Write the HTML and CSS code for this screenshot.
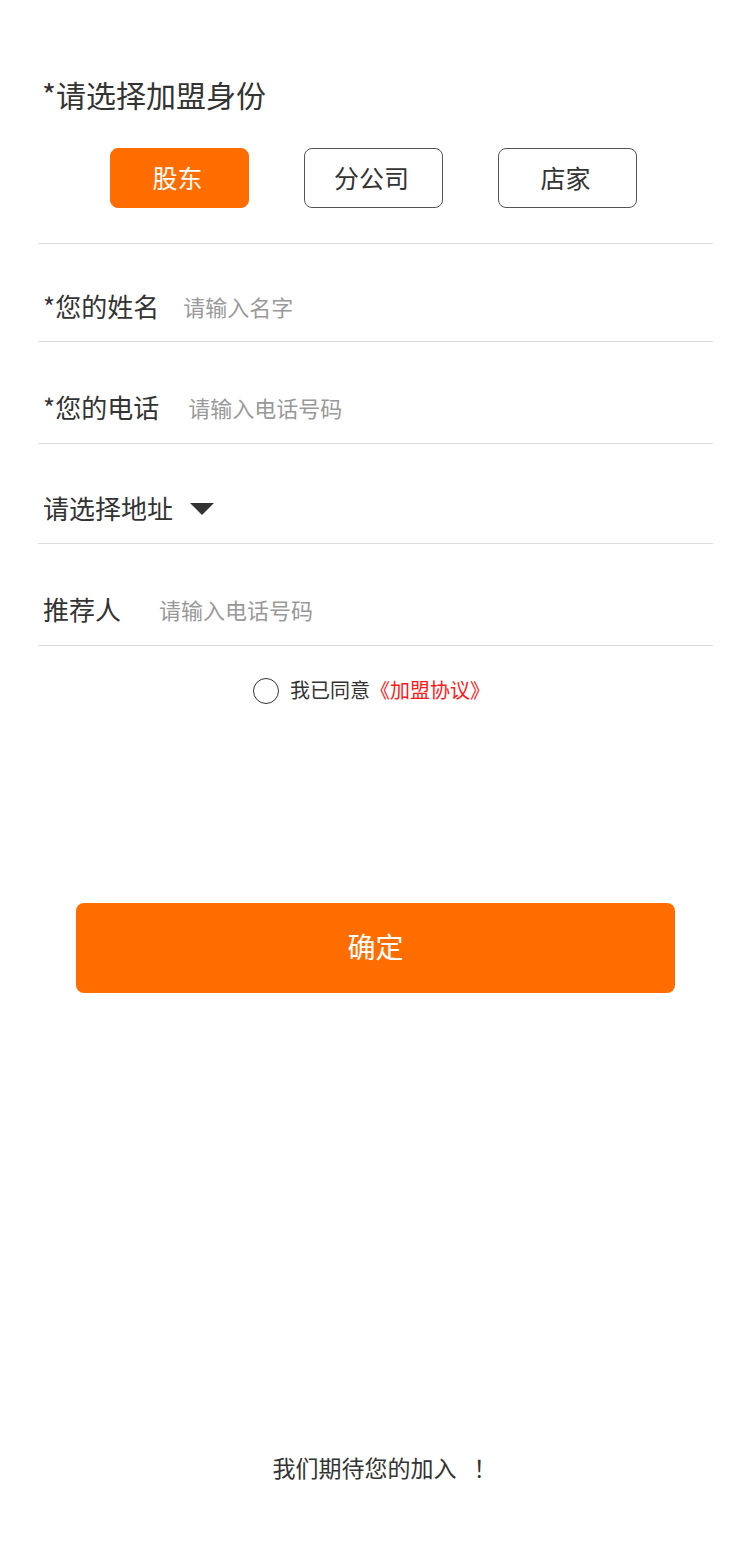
FILE: index.html
```html
<!DOCTYPE html>
<html lang="zh-CN">
<head>
<meta charset="utf-8">
<title>加盟</title>
<link rel="stylesheet" href="styles.css">
</head>
<body>
<div class="page">
  <section class="identity">
    <div class="title">*请选择加盟身份</div>
    <div class="roles">
      <div class="role role--active">股东</div>
      <div class="role">分公司</div>
      <div class="role">店家</div>
    </div>
  </section>

  <div class="field field--first">
    <span class="label">*您的姓名</span>
    <span class="placeholder ph-name">请输入名字</span>
  </div>
  <div class="field">
    <span class="label">*您的电话</span>
    <span class="placeholder ph-phone">请输入电话号码</span>
  </div>
  <div class="field field--third">
    <span class="label">请选择地址</span>
    <svg class="caret" width="24" height="12" viewBox="0 0 24 12"><polygon points="0,0 24,0 12,12" fill="#333"/></svg>
  </div>
  <div class="field">
    <span class="label">推荐人</span>
    <span class="placeholder ph-ref">请输入电话号码</span>
  </div>

  <div class="agree">
    <span class="radio"></span>
    <span class="agree-text">我已同意<span class="link">《加盟协议》</span></span>
  </div>

  <button class="confirm">确定</button>

  <div class="footer">我们期待您的加入<span class="bang">！</span></div>
</div>
</body>
</html>
```
FILE: styles.css
```css
* { box-sizing: border-box; }
body {
  margin: 0;
  background: #fff;
  color: #333;
  font-family: "Noto Sans CJK SC", "Noto Sans", sans-serif;
}
.page {
  width: 750px;
  padding: 0 37px 0 38px;
}
.identity {
  padding-top: 77px;
  padding-bottom: 35px;
  border-bottom: 1px solid #dcdcdc;
}
.title {
  font-size: 30px;
  line-height: 34px;
  padding-left: 4px;
  color: #333;
}
.roles {
  display: flex;
  justify-content: center;
  gap: 55px;
  margin-top: 37px;
  padding-right: 4px;
}
.role {
  width: 139px;
  height: 60px;
  padding: 0 4px 3px 0;
  border: 1px solid #555;
  border-radius: 8px;
  display: flex;
  align-items: center;
  justify-content: center;
  font-size: 25px;
  color: #333;
}
.role--active {
  background: #ff6d00;
  border-color: #ff6d00;
  color: #fff;
}
.field {
  display: flex;
  align-items: center;
  height: 102px;
  padding: 47px 0 18px 5px;
  border-bottom: 1px solid #dcdcdc;
}
.field--first {
  height: 98px;
  padding-top: 44px;
  padding-bottom: 17px;
}
.field--third {
  height: 100px;
  padding-top: 46px;
  padding-bottom: 17px;
}
.label {
  font-size: 26px;
  line-height: 36px;
  color: #333;
}
.placeholder {
  font-size: 22px;
  line-height: 36px;
  color: #999;
}
.ph-name { margin-left: 24px; }
.ph-phone { margin-left: 29px; }
.ph-ref { margin-left: 38px; }
.caret {
  margin-left: 17px;
  margin-top: 1px;
}
.agree {
  display: flex;
  align-items: center;
  justify-content: center;
  margin-top: 32px;
  padding-right: 8px;
  height: 26px;
}
.radio {
  width: 26px;
  height: 26px;
  border: 1px solid #333;
  border-radius: 50%;
}
.agree-text {
  margin-left: 11px;
  font-size: 20px;
  line-height: 26px;
  padding-bottom: 2px;
  color: #333;
}
.link { color: #ff1a1a; }
.confirm {
  display: block;
  margin: 199px 0 0 38px;
  width: 599px;
  height: 90px;
  padding: 0 0 4px;
  border: none;
  border-radius: 8px;
  background: #ff6d00;
  color: #fff;
  font-family: inherit;
  font-size: 28px;
}
.footer {
  margin-top: 457px;
  padding-left: 18px;
  font-size: 23px;
  line-height: 34px;
  text-align: center;
  color: #333;
}
.bang { margin-left: 17px; }
```
